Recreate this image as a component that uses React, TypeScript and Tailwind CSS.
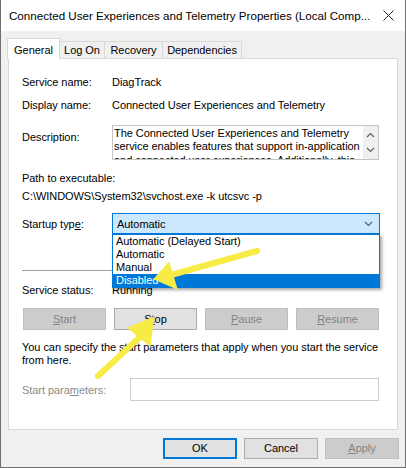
import React from "react";

const font = "font-['Liberation_Sans',Arial,sans-serif]";

function Chevron({ up = false }: { up?: boolean }) {
  return (
    <svg width="9" height="6" viewBox="0 0 9 6" fill="none">
      <path
        d={up ? "M1 5 L4.5 1.5 L8 5" : "M1 1 L4.5 4.5 L8 1"}
        stroke="#606060"
        strokeWidth="1.2"
      />
    </svg>
  );
}

function Btn({
  children,
  disabled,
  className = "",
}: {
  children: React.ReactNode;
  disabled?: boolean;
  className?: string;
}) {
  return (
    <div
      className={
        "flex items-center justify-center border " +
        (disabled
          ? "bg-[#cccccc] border-[#bfbfbf] text-[#838383] "
          : "bg-[#e1e1e1] border-[#adadad] text-black ") +
        className
      }
    >
      {children}
    </div>
  );
}

export default function App() {
  return (
    <div
      className={`relative w-[406px] h-[468px] bg-[#f0f0f0] border-x border-b border-[#6f6f6f] text-[11px] tracking-[-0.05px] text-black ${font} flex flex-col`}
    >
      {/* title bar */}
      <div className="h-[31px] bg-white flex items-center justify-between pl-[8px] pr-[11px]">
        <span className="text-[11.6px] tracking-normal whitespace-nowrap">
          Connected User Experiences and Telemetry Properties (Local Comp...
        </span>
        <svg width="11" height="11" viewBox="0 0 11 11">
          <path d="M0.5 0.5 L10.5 10.5 M10.5 0.5 L0.5 10.5" stroke="#222" strokeWidth="1" />
        </svg>
      </div>

      <div className="pl-[7px] pt-[7px]">
        {/* tabs */}
        <div className="flex items-end h-[20px] -ml-px">
          <div className="relative z-10 h-[21px] -mb-px bg-white border-x border-t border-[#d9d9d9] flex items-start justify-center pt-[3px] w-[53px]">
            General
          </div>
          <div className="h-[17px] w-[45px] border-t border-r border-[#d9d9d9] flex items-center justify-center">
            Log On
          </div>
          <div className="h-[17px] w-[58px] border-t border-r border-[#d9d9d9] flex items-center justify-center">
            Recovery
          </div>
          <div className="h-[17px] w-[79px] border-t border-r border-[#d9d9d9] flex items-center justify-center">
            Dependencies
          </div>
        </div>

        {/* panel */}
        <div className="relative w-[390px] h-[372px] bg-white border border-[#d9d9d9] pl-[13px] leading-[16px]">
          <div className="flex mt-[15px]">
            <div className="w-[90px]">Service name:</div>
            <div>DiagTrack</div>
          </div>
          <div className="flex mt-[7px]">
            <div className="w-[90px]">Display name:</div>
            <div>Connected User Experiences and Telemetry</div>
          </div>
          <div className="flex mt-[12px]">
            <div className="w-[90px] pt-[4px]">Description:</div>
            <div className="w-[267px] h-[35px] border border-[#c4c4c4] flex overflow-hidden">
              <div className="flex-1 pl-[1px] leading-[13.3px] pt-px whitespace-nowrap">
                The Connected User Experiences and Telemetry
                <br />
                service enables features that support in-application
                <br />
                and connected user experiences. Additionally, this
              </div>
              <div className="w-[15px] bg-[#f0f0f0] flex flex-col items-center justify-between py-[6px]">
                <Chevron up />
                <Chevron />
              </div>
            </div>
          </div>
          <div className="mt-[10px]">Path to executable:</div>
          <div className="mt-[2px]">C:\WINDOWS\System32\svchost.exe -k utcsvc -p</div>

          <div className="flex items-center mt-[9px]">
            <div className="w-[90px]">
              Startup typ<span className="underline">e</span>:
            </div>
            <div className="relative w-[268px] h-[21px] bg-[#cce8ff] border border-[#0078d7] flex items-center justify-between pl-[4px] pr-[6px]">
              <span>Automatic</span>
              <Chevron />
              {/* open list */}
              <div className="absolute z-20 left-[-1px] top-[20px] w-[268px] bg-white border border-[#0078d7] leading-[13px] shadow-[2px_2px_3px_rgba(0,0,0,0.35)]">
                <div className="h-[13px] pl-[3px]">Automatic (Delayed Start)</div>
                <div className="h-[13px] pl-[3px]">Automatic</div>
                <div className="h-[13px] pl-[3px]">Manual</div>
                <div className="h-[13px] pl-[3px] bg-[#0078d7] text-white">Disabled</div>
              </div>
            </div>
          </div>

          <div className="mt-[36px] w-[356px] h-px bg-[#a0a0a0]" />

          <div className="flex mt-[11px]">
            <div className="w-[90px]">Service status:</div>
            <div>Running</div>
          </div>

          <div className="flex gap-[8px] ml-px mt-[10px]">
            <Btn disabled className="w-[83px] h-[22px]">
              <span><span className="underline">S</span>tart</span>
            </Btn>
            <Btn className="w-[83px] h-[22px]">
              <span>S<span className="underline">t</span>op</span>
            </Btn>
            <Btn disabled className="w-[83px] h-[22px]">
              <span><span className="underline">P</span>ause</span>
            </Btn>
            <Btn disabled className="w-[83px] h-[22px]">
              <span><span className="underline">R</span>esume</span>
            </Btn>
          </div>

          <div className="mt-[11px] leading-[13px] whitespace-nowrap">
            You can specify the start parameters that apply when you start the service
            <br />
            from here.
          </div>

          <div className="flex items-center mt-[11px]">
            <div className="w-[108px] text-[#8a8a8a]">
              Start para<span className="underline">m</span>eters:
            </div>
            <div className="w-[249px] h-[23px] border border-[#cccccc] bg-white" />
          </div>
        </div>

        {/* dialog buttons */}
        <div className="flex justify-end gap-[7px] pr-[6px] mt-[8px]">
          <div className="w-[74px] h-[21px] bg-[#e1e1e1] border-2 border-[#0078d7] flex items-center justify-center">
            OK
          </div>
          <Btn className="w-[74px] h-[21px]">Cancel</Btn>
          <Btn disabled className="w-[74px] h-[21px]">
            <span><span className="underline">A</span>pply</span>
          </Btn>
        </div>
      </div>

      {/* annotation arrows */}
      <svg
        className="absolute left-0 top-0 pointer-events-none z-30"
        width="406"
        height="468"
        viewBox="0 0 406 468"
      >
        <g fill="#f7ec45" stroke="#f7ec45" strokeLinejoin="round">
          <line x1="256" y1="251" x2="170" y2="275" strokeWidth="6" strokeLinecap="round" />
          <polygon points="153,279 168,262 176,289" strokeWidth="1" />
          <line x1="97" y1="376" x2="140" y2="336" strokeWidth="6" strokeLinecap="round" />
          <polygon points="153,317 127,328 149,346" strokeWidth="1" />
        </g>
      </svg>
    </div>
  );
}
